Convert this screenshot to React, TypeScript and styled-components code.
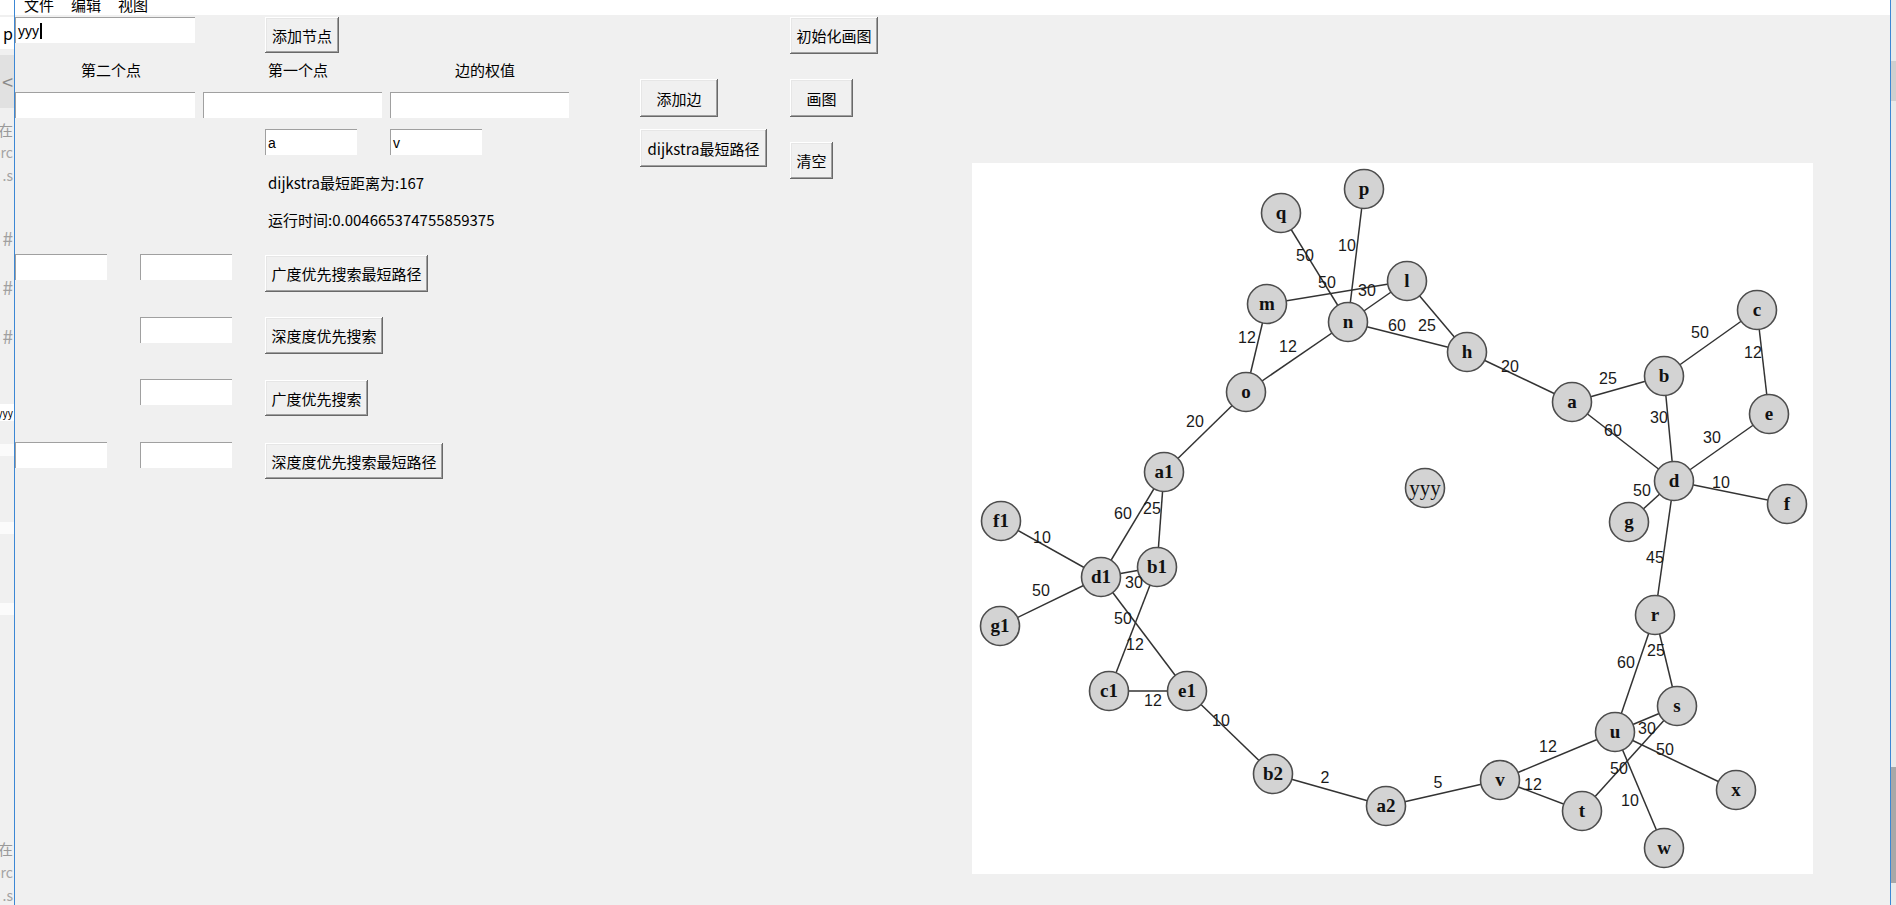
import React from "react";
import styled, { createGlobalStyle } from "styled-components";

const uiFont = `"Noto Sans CJK SC", "Microsoft YaHei", sans-serif`;

const GlobalStyle = createGlobalStyle`
  html, body {
    margin: 0;
    padding: 0;
    width: 1896px;
    height: 905px;
    overflow: hidden;
    background: #f0f0f0;
  }
  #root {
    width: 1896px;
    height: 905px;
  }
`;

type Slot = { h: number; bg?: string; text?: string; size?: number; color?: string };

// fragments of the window lying behind, seen down the left edge
const backSlots: Slot[] = [
  { h: 15, bg: "#ffffff" },
  { h: 2 },
  { h: 32, bg: "#ffffff", text: "p", size: 16, color: "#000" },
  { h: 6 },
  { h: 53, bg: "#e1e1e1", text: "<", size: 20, color: "#8a8a8a" },
  { h: 10 },
  { h: 22, text: "在", size: 15, color: "#9a9a9a" },
  { h: 24, text: "orc", size: 14, color: "#a4a4a4" },
  { h: 22, text: ".s", size: 14, color: "#a4a4a4" },
  { h: 40 },
  { h: 22, text: "#", size: 19, color: "#a0a0a0" },
  { h: 27 },
  { h: 22, text: "#", size: 19, color: "#a0a0a0" },
  { h: 27 },
  { h: 22, text: "#", size: 19, color: "#a0a0a0" },
  { h: 58 },
  { h: 17, bg: "#ffffff", text: "yyy", size: 10, color: "#000" },
  { h: 23 },
  { h: 12, bg: "#fbfbfb" },
  { h: 66 },
  { h: 12, bg: "#fbfbfb" },
  { h: 69 },
  { h: 12, bg: "#fbfbfb" },
  { h: 222 },
  { h: 22, text: "在", size: 15, color: "#9a9a9a" },
  { h: 26, text: "orc", size: 14, color: "#a4a4a4" },
  { h: 20, text: ".s", size: 14, color: "#a4a4a4" },
];

const nodes: Record<string, [number, number]> = {
  q: [309, 50], p: [392, 26], l: [435, 118], m: [295, 141], n: [376, 159],
  o: [274, 229], a1: [192, 309], f1: [29, 358], h: [495, 189], c: [785, 147],
  b: [692, 213], a: [600, 239], e: [797, 251], d: [702, 318], f: [815, 341],
  g: [657, 359], yyy: [453, 325], d1: [129, 414], b1: [185, 404], g1: [28, 463],
  c1: [137, 528], e1: [215, 528], b2: [301, 611], a2: [414, 643], r: [683, 452],
  s: [705, 543], u: [643, 569], v: [528, 617], t: [610, 648], x: [764, 627],
  w: [692, 685],
};

const edges: [string, string, number, number, number][] = [
  ["q", "n", 50, 333, 92], ["p", "n", 10, 375, 82], ["m", "l", 50, 355, 119],
  ["n", "l", 30, 395, 127], ["n", "h", 60, 425, 162], ["l", "h", 25, 455, 162],
  ["m", "o", 12, 275, 174], ["n", "o", 12, 316, 183], ["o", "a1", 20, 223, 258],
  ["a1", "d1", 60, 151, 350], ["a1", "b1", 25, 180, 345], ["h", "a", 20, 538, 203],
  ["a", "b", 25, 636, 215], ["b", "c", 50, 728, 169], ["c", "e", 12, 781, 189],
  ["b", "d", 30, 687, 254], ["a", "d", 60, 641, 267], ["e", "d", 30, 740, 274],
  ["d", "f", 10, 749, 319], ["d", "g", 50, 670, 327], ["d", "r", 45, 683, 394],
  ["f1", "d1", 10, 70, 374], ["g1", "d1", 50, 69, 427], ["d1", "b1", 30, 162, 419],
  ["d1", "e1", 50, 151, 455], ["b1", "c1", 12, 163, 481], ["c1", "e1", 12, 181, 537],
  ["e1", "b2", 10, 249, 557], ["b2", "a2", 2, 353, 614], ["a2", "v", 5, 466, 619],
  ["r", "u", 60, 654, 499], ["r", "s", 25, 684, 487], ["u", "s", 30, 675, 565],
  ["u", "x", 50, 693, 586], ["v", "u", 12, 576, 583], ["s", "t", 50, 647, 605],
  ["v", "t", 12, 561, 621], ["u", "w", 10, 658, 637],
];

function App() {
  return (
    <>
      <GlobalStyle />
      <Screen>
        <BackWindow>
          {backSlots.map((s, i) => (
            <BackSlot key={i} $h={s.h} $bg={s.bg} $size={s.size} $color={s.color}>
              {s.text}
            </BackSlot>
          ))}
        </BackWindow>

        <Window>
          <MenuBar>
            <MenuItem>文件</MenuItem>
            <MenuItem>编辑</MenuItem>
            <MenuItem>视图</MenuItem>
          </MenuBar>

          <Body>
            <FormColumn>
              <Row $mt={2} $h={36}>
                <Entry $w={180}>
                  yyy<Caret />
                </Entry>
                <Button $w={74} $h={36} $ml={70}>添加节点</Button>
              </Row>

              <LabelRow>
                <FieldLabel>第二个点</FieldLabel>
                <FieldLabel>第一个点</FieldLabel>
                <FieldLabel>边的权值</FieldLabel>
              </LabelRow>

              <Row $mt={12} $gap={8}>
                <Entry $w={180} />
                <Entry $w={179} />
                <Entry $w={179} />
              </Row>

              <Row $mt={11}>
                <Entry $w={92} $ml={250}>a</Entry>
                <Entry $w={92} $ml={33}>v</Entry>
              </Row>

              <ResultLine $mt={18}>dijkstra最短距离为:167</ResultLine>
              <ResultLine $mt={17}>运行时间:0.004665374755859375</ResultLine>

              <Row $mt={24}>
                <Entry $w={92} />
                <Entry $w={92} $ml={33} />
                <Button $w={163} $ml={33} $mt={1}>广度优先搜索最短路径</Button>
              </Row>

              <Row $mt={25}>
                <Entry $w={92} $ml={125} />
                <Button $w={118} $ml={33}>深度度优先搜索</Button>
              </Row>

              <Row $mt={25}>
                <Entry $w={92} $ml={125} />
                <Button $w={103} $h={36} $ml={33} $mt={1}>广度优先搜索</Button>
              </Row>

              <Row $mt={26}>
                <Entry $w={92} />
                <Entry $w={92} $ml={33} />
                <Button $w={178} $h={36} $ml={33} $mt={1}>深度度优先搜索最短路径</Button>
              </Row>
            </FormColumn>

            <ButtonColumn $w={150} $pt={64} $gap={12}>
              <Button $w={78} $h={38}>添加边</Button>
              <Button $w={127} $h={38}>dijkstra最短路径</Button>
            </ButtonColumn>

            <ButtonColumn $w={182} $pt={2} $gap={25}>
              <Button $w={88}>初始化画图</Button>
              <Button $w={63} $h={38}>画图</Button>
              <Button $w={43}>清空</Button>
            </ButtonColumn>

            <CanvasPanel>
              <svg width="841" height="711" viewBox="0 0 841 711">
                {edges.map(([from, to], i) => (
                  <line
                    key={i}
                    x1={nodes[from][0]}
                    y1={nodes[from][1]}
                    x2={nodes[to][0]}
                    y2={nodes[to][1]}
                    stroke="#333"
                    strokeWidth="1.5"
                  />
                ))}
                {Object.entries(nodes).map(([name, [cx, cy]]) => (
                  <g key={name}>
                    <circle cx={cx} cy={cy} r="19.5" fill="#d3d3d3" stroke="#4d4d4d" strokeWidth="1.6" />
                    <text
                      x={cx}
                      y={cy + (name === "yyy" ? 7 : 6)}
                      textAnchor="middle"
                      fontFamily='"Liberation Serif", "Times New Roman", serif'
                      fontWeight={name === "yyy" ? 400 : 700}
                      fontSize={name === "yyy" ? 21 : 19}
                      fill="#111"
                    >
                      {name}
                    </text>
                  </g>
                ))}
                {edges.map(([, , weight, lx, ly], i) => (
                  <text
                    key={i}
                    x={lx}
                    y={ly + 6}
                    textAnchor="middle"
                    fontFamily='"Liberation Sans", Arial, sans-serif'
                    fontSize="16"
                    fill="#1a1a1a"
                  >
                    {weight}
                  </text>
                ))}
              </svg>
            </CanvasPanel>
          </Body>
        </Window>

        <ScrollEdge>
          <Thumb $mt={61} $h={40} $tone="#cfcfcf" />
          <Thumb $mt={666} $h={116} $tone="#a8a8a8" />
        </ScrollEdge>
      </Screen>
    </>
  );
}

const Screen = styled.div`
  display: flex;
  width: 1896px;
  height: 905px;
  overflow: hidden;
  background: #f0f0f0;
`;

const BackWindow = styled.div`
  width: 14px;
  flex: none;
  display: flex;
  flex-direction: column;
  overflow: hidden;
  background: #f0f0f0;
  border-right: 1px solid #3c87d4;
`;

const BackSlot = styled.div<{ $h: number; $bg?: string; $size?: number; $color?: string }>`
  height: ${(p) => p.$h}px;
  flex: none;
  display: flex;
  align-items: center;
  justify-content: flex-end;
  padding-right: 1px;
  overflow: hidden;
  white-space: nowrap;
  background: ${(p) => p.$bg ?? "transparent"};
  color: ${(p) => p.$color ?? "#999"};
  font-family: ${uiFont};
  font-size: ${(p) => p.$size ?? 14}px;
  line-height: 1;
`;

const Window = styled.div`
  flex: 1;
  display: flex;
  flex-direction: column;
  background: #f0f0f0;
`;

const MenuBar = styled.div`
  height: 15px;
  flex: none;
  display: flex;
  gap: 17px;
  padding-left: 9px;
  overflow: hidden;
  background: #ffffff;
`;

const MenuItem = styled.span`
  margin-top: -5px;
  font-family: ${uiFont};
  font-size: 15px;
  line-height: 19px;
  color: #000;
`;

const Body = styled.div`
  display: flex;
  align-items: flex-start;
`;

const FormColumn = styled.div`
  width: 625px;
  flex: none;
  display: flex;
  flex-direction: column;
`;

const Row = styled.div<{ $mt: number; $h?: number; $gap?: number }>`
  display: flex;
  align-items: flex-start;
  margin-top: ${(p) => p.$mt}px;
  gap: ${(p) => p.$gap ?? 0}px;
  ${(p) => (p.$h ? `height: ${p.$h}px;` : "")}
`;

const LabelRow = styled.div`
  display: flex;
  gap: 7px;
  margin-top: 7px;
  padding-left: 6px;
  height: 20px;
`;

const FieldLabel = styled.div`
  width: 180px;
  text-align: center;
  font-family: ${uiFont};
  font-size: 15px;
  line-height: 20px;
  color: #000;
`;

const Entry = styled.div<{ $w: number; $ml?: number }>`
  width: ${(p) => p.$w}px;
  height: 26px;
  flex: none;
  box-sizing: border-box;
  margin-left: ${(p) => p.$ml ?? 0}px;
  padding-left: 2px;
  display: flex;
  align-items: center;
  background: #ffffff;
  border-top: 1px solid #a0a0a0;
  border-left: 1px solid #a0a0a0;
  font-family: "Liberation Sans", Arial, sans-serif;
  font-size: 14px;
  color: #000;
`;

const Caret = styled.span`
  width: 2px;
  height: 16px;
  margin-left: 1px;
  background: #000;
`;

const ResultLine = styled.div<{ $mt: number }>`
  margin-top: ${(p) => p.$mt}px;
  padding-left: 253px;
  height: 20px;
  white-space: nowrap;
  font-family: ${uiFont};
  font-size: 15px;
  line-height: 20px;
  color: #000;
`;

const Button = styled.button<{ $w: number; $h?: number; $ml?: number; $mt?: number }>`
  width: ${(p) => p.$w}px;
  height: ${(p) => p.$h ?? 37}px;
  flex: none;
  margin: ${(p) => p.$mt ?? 0}px 0 0 ${(p) => p.$ml ?? 0}px;
  padding: 0;
  border: none;
  display: flex;
  align-items: center;
  justify-content: center;
  white-space: nowrap;
  background: #f0f0f0;
  box-shadow: inset -1px -1px #696969, inset 1px 1px #ffffff, inset -2px -2px #a0a0a0,
    inset 2px 2px #e6e6e6;
  font-family: ${uiFont};
  font-size: 15px;
  line-height: 1;
  color: #000;
`;

const ButtonColumn = styled.div<{ $w: number; $pt: number; $gap: number }>`
  width: ${(p) => p.$w}px;
  flex: none;
  display: flex;
  flex-direction: column;
  gap: ${(p) => p.$gap}px;
  padding-top: ${(p) => p.$pt}px;
`;

const CanvasPanel = styled.div`
  width: 841px;
  height: 711px;
  flex: none;
  margin-top: 148px;
  background: #ffffff;

  svg {
    display: block;
  }
`;

const ScrollEdge = styled.div`
  width: 5px;
  flex: none;
  display: flex;
  flex-direction: column;
  background: #e9e9e9;
  border-left: 1px solid #3c87d4;
`;

const Thumb = styled.div<{ $mt: number; $h: number; $tone: string }>`
  margin-top: ${(p) => p.$mt}px;
  height: ${(p) => p.$h}px;
  background: ${(p) => p.$tone};
`;

export default App;
